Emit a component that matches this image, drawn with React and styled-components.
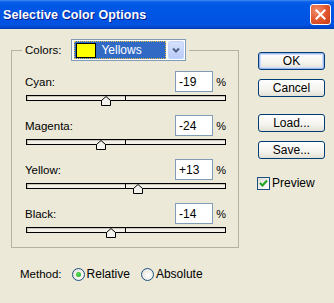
import React from 'react'
import styled, { createGlobalStyle } from 'styled-components'

const GlobalStyle = createGlobalStyle`
    body {
        margin: 0;
        background: #ECE9D8;
        font-family: "Liberation Sans", Arial, sans-serif;
        font-size: 11.5px;
        color: #000;
    }
`

const Window = styled.div`
    width: 334px;
    height: 303px;
    background: #ECE9D8;
    overflow: hidden;
`

const TitleBar = styled.div`
    height: 29px;
    display: flex;
    align-items: center;
    justify-content: space-between;
    padding: 0 2px 0 3px;
    box-sizing: border-box;
    background: linear-gradient(to bottom, #3F8CF3 0px, #0A5FE8 2px, #0058E6 5px, #0055E5 50%, #0052E0 85%, #0044C8 96%, #003AAE 100%);
`

const Title = styled.span`
    color: #fff;
    font-weight: bold;
    font-size: 12.5px;
    letter-spacing: 0.1px;
    text-shadow: 1px 1px 0 #0A1E8C;
    margin-top: 1px;
`

const CloseButton = styled.div`
    width: 21px;
    height: 21px;
    box-sizing: border-box;
    border: 1px solid #fff;
    border-radius: 3px;
    background: radial-gradient(circle at 30% 30%, #F0906E 0%, #E2582F 50%, #C53A15 100%);
    display: flex;
    align-items: center;
    justify-content: center;
    margin-right: 1px;
`

const Content = styled.div`
    display: flex;
    padding: 10px 0 0 11px;
`

const LeftColumn = styled.div`
    width: 228px;
    display: flex;
    flex-direction: column;
`

const Group = styled.fieldset`
    margin: 0;
    padding: 10px 12px 14px 13px;
    border: 1px solid #B5B2A4;
    border-radius: 0;
    display: flex;
    flex-direction: column;
    gap: 14px;
`

const Legend = styled.legend`
    padding: 0 3px;
    margin-left: -3px;
    display: flex;
    align-items: center;
    gap: 10px;
`

const Select = styled.div`
    width: 115px;
    height: 22px;
    box-sizing: border-box;
    border: 1px solid #7F9DB9;
    background: #fff;
    display: flex;
    align-items: center;
    padding: 1px 1px 1px 2px;
    gap: 2px;
`

const Selected = styled.div`
    flex: 1;
    height: 18px;
    box-sizing: border-box;
    background: #316AC5;
    outline: 1px dotted #E8C048;
    outline-offset: -1px;
    display: flex;
    align-items: center;
    padding-left: 2px;
    gap: 5px;
    color: #fff;
    font-size: 12px;
`

const Swatch = styled.span`
    width: 20px;
    height: 15px;
    box-sizing: border-box;
    border: 1px solid #000;
    background: #FFFF00;
`

const ArrowButton = styled.div`
    width: 16px;
    height: 18px;
    box-sizing: border-box;
    border-radius: 2px;
    background: linear-gradient(to bottom, #D6E1FB, #B9CCF7);
    border: 1px solid #C3D3FD;
    display: flex;
    align-items: center;
    justify-content: center;
`

const Row = styled.div`
    display: flex;
    flex-direction: column;
    gap: 3px;
`

const LabelLine = styled.div`
    display: flex;
    align-items: center;
    height: 21px;
`

const Label = styled.span`
    flex: 1;
`

const ValueBox = styled.div`
    width: 38px;
    height: 21px;
    box-sizing: border-box;
    border: 1px solid #7F9DB9;
    background: #fff;
    padding: 0 3px;
    display: flex;
    align-items: center;
    font-size: 12px;
`

const Percent = styled.span`
    width: 13px;
    text-align: right;
    font-size: 11px;
`

const Track = styled.div`
    position: relative;
    width: 200px;
    height: 6px;
    box-sizing: border-box;
    margin-left: 1px;
    border: 1px solid #000;
    background: #F2F0E8;
    box-shadow: inset 1px 1px 0 #C9C6B8;
`

const CenterTick = styled.span`
    position: absolute;
    left: 98px;
    top: -1px;
    width: 1px;
    height: 6px;
    background: #000;
`

const Thumb = styled.svg`
    position: absolute;
    top: 0px;
    width: 11px;
    height: 10px;
`

const MethodRow = styled.div`
    display: flex;
    align-items: center;
    margin-top: 19px;
    padding-left: 9px;
`

const RadioOption = styled.label`
    display: flex;
    align-items: center;
    gap: 2px;
    margin-left: ${p => p.$first ? '10px' : '11px'};
    font-size: 12px;
`

const RadioCircle = styled.span`
    width: 13px;
    height: 13px;
    box-sizing: border-box;
    border-radius: 50%;
    border: 1px solid #1C5180;
    background: radial-gradient(circle at 60% 60%, #fff 0%, #E8E7DF 70%, #D4D2C5 100%);
    display: flex;
    align-items: center;
    justify-content: center;
`

const RadioDot = styled.span`
    width: 5px;
    height: 5px;
    border-radius: 50%;
    background: radial-gradient(circle at 40% 40%, #5CE05C, #21A121);
`

const RightColumn = styled.div`
    width: 67px;
    margin-left: 19px;
    padding-top: 13px;
    display: flex;
    flex-direction: column;
`

const Button = styled.div`
    height: 18px;
    box-sizing: border-box;
    border: 1px solid #003C74;
    border-radius: 3px;
    background: linear-gradient(to bottom, #FFFFFF 0%, #F4F3EE 60%, #E3E1D6 100%);
    display: flex;
    align-items: center;
    justify-content: center;
    font-size: 12px;
    margin-top: ${p => p.$gap || 0}px;
    box-shadow: ${p => p.$default ? 'inset 0 0 0 1px #9DB8F0, inset 0 0 0 2px #CCDCFA' : 'none'};
`

const CheckRow = styled.label`
    display: flex;
    align-items: center;
    gap: 2px;
    margin-top: 17px;
    margin-left: -1px;
    font-size: 12px;
`

const CheckBox = styled.span`
    width: 13px;
    height: 13px;
    box-sizing: border-box;
    border: 1px solid #1C5180;
    background: linear-gradient(135deg, #DCDBD3, #fff);
    display: flex;
    align-items: center;
    justify-content: center;
`

const channels = [
    { name: 'Cyan:', value: -19 },
    { name: 'Magenta:', value: -24 },
    { name: 'Yellow:', value: 13 },
    { name: 'Black:', value: -14 },
]

const formatValue = (v) => (v > 0 ? `+${v}` : `${v}`)

function ChannelSlider({ name, value }) {
    return (
        <Row>
            <LabelLine>
                <Label>{name}</Label>
                <ValueBox>{formatValue(value)}</ValueBox>
                <Percent>%</Percent>
            </LabelLine>
            <Track>
                <CenterTick />
                <Thumb style={{ left: 98 + value - 5 }} viewBox="0 0 11 10">
                    <polygon points="0.5,9.5 0.5,4.5 5,0.5 9.5,4.5 9.5,9.5" fill="#F4F3EE" stroke="#000" strokeWidth="1" />
                </Thumb>
            </Track>
        </Row>
    )
}

export default function App() {
    return (
        <Window>
            <GlobalStyle />
            <TitleBar>
                <Title>Selective Color Options</Title>
                <CloseButton>
                    <svg width="11" height="11" viewBox="0 0 11 11">
                        <path d="M1.5 1.5 L9.5 9.5 M9.5 1.5 L1.5 9.5" stroke="#fff" strokeWidth="2" strokeLinecap="square" />
                    </svg>
                </CloseButton>
            </TitleBar>
            <Content>
                <LeftColumn>
                    <Group>
                        <Legend>
                            <span>Colors:</span>
                            <Select>
                                <Selected>
                                    <Swatch />
                                    <span>Yellows</span>
                                </Selected>
                                <ArrowButton>
                                    <svg width="8" height="6" viewBox="0 0 8 6">
                                        <path d="M1 1.5 L4 4.5 L7 1.5" fill="none" stroke="#4D6185" strokeWidth="2" />
                                    </svg>
                                </ArrowButton>
                            </Select>
                        </Legend>
                        {channels.map((c) => (
                            <ChannelSlider key={c.name} name={c.name} value={c.value} />
                        ))}
                    </Group>
                    <MethodRow>
                        <span>Method:</span>
                        <RadioOption $first>
                            <RadioCircle><RadioDot /></RadioCircle>
                            Relative
                        </RadioOption>
                        <RadioOption>
                            <RadioCircle />
                            Absolute
                        </RadioOption>
                    </MethodRow>
                </LeftColumn>
                <RightColumn>
                    <Button $default>OK</Button>
                    <Button $gap={9}>Cancel</Button>
                    <Button $gap={17}>Load...</Button>
                    <Button $gap={9}>Save...</Button>
                    <CheckRow>
                        <CheckBox>
                            <svg width="9" height="9" viewBox="0 0 9 9">
                                <path d="M1 4 L3.5 6.5 L8 1.5" fill="none" stroke="#21A121" strokeWidth="2" />
                            </svg>
                        </CheckBox>
                        Preview
                    </CheckRow>
                </RightColumn>
            </Content>
        </Window>
    )
}
